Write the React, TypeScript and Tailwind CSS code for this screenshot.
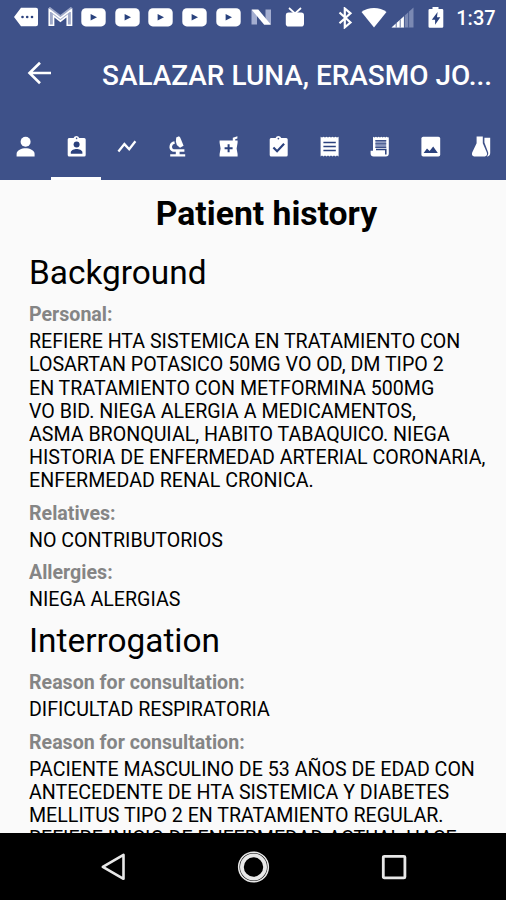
import type { ReactNode } from 'react';

type IconProps = { w: number; h: number; children: ReactNode; className?: string };

function Icon({ w, h, children, className }: IconProps) {
    return (
        <svg width={w} height={h} viewBox={`0 0 ${w} ${h}`} fill="currentColor" className={className}>
            {children}
        </svg>
    );
}

const BLUE = '#3e5189';
const DEEP = '#2b417d';

function VideoIcon() {
    return (
        <Icon w={25} h={20}>
            <rect x="0.3" y="1.2" width="24.4" height="18.2" rx="4.5" />
            <path d="M9.6 7 16 10.3l-6.4 3.3z" fill="#28417d" />
        </Icon>
    );
}

function StatusBar() {
    return (
        <div className="flex h-[34px] shrink-0 items-start pt-[7px] pl-[14px]">
            <Icon w={25} h={20} className="mr-[8.5px]">
                <path d="M7 .8h15a2 2 0 0 1 2 2v14.4a2 2 0 0 1-2 2H7L0 10z" />
                <circle cx="8.5" cy="10" r="1.3" fill={DEEP} />
                <circle cx="13.2" cy="10" r="1.3" fill={DEEP} />
                <circle cx="18" cy="10" r="1.3" fill={DEEP} />
            </Icon>
            <Icon w={25} h={20} className="mr-[8.5px]">
                <path d="M3.4 18.2V3.8l9 7 9-7v14.4" fill="none" stroke="#9fa9c9" strokeWidth="4.4" />
                <path d="M1.2 18.2V2.6L12.4 11 23.6 2.6v15.6h-4.4V8.8l-6.8 5.4-6.8-5.4v9.4z" fill="none" stroke="#fff" strokeWidth="1.5" />
            </Icon>
            <div className="flex gap-[8.7px]">
                <VideoIcon />
                <VideoIcon />
                <VideoIcon />
                <VideoIcon />
                <VideoIcon />
            </div>
            <Icon w={21} h={20} className="ml-[10px]">
                <path d="M.5 3h5.5v14.5H.5zM14.5 2.5H20V17h-5.5z" fill="#a3add0" />
                <path d="M.5 2.5h6.8L20 17.8h-6.8z" />
            </Icon>
            <Icon w={20} h={21} className="ml-[13px]">
                <path d="m4 1 6 5.5L16 1" fill="none" stroke="currentColor" strokeWidth="1.7" />
                <rect x="0.8" y="5.6" width="18.2" height="14" rx="2.8" />
            </Icon>
            <Icon w={15} h={22} className="ml-[33px]">
                <path d="m1.5 5.5 11 10-5.7 4.8V1.5l5.7 4.8-11 10" fill="none" stroke="currentColor" strokeWidth="2.2" />
            </Icon>
            <Icon w={26} h={21} className="ml-[8.5px]">
                <path d="M.5 5C7-.5 19-.5 25.5 5L13 20.5z" />
            </Icon>
            <Icon w={23} h={21} className="ml-[4px]">
                <path d="M22.5.5v20H.5z" fill="#7b89b3" />
                <path d="M13 9.2v11.3H.5z" />
                <path d="M5.2 16v4.5M9.2 12.5v8M13.4 8.5v12M17.6 4.5v16" stroke={BLUE} strokeWidth=".8" />
            </Icon>
            <Icon w={16} h={22} className="ml-[14px]">
                <path d="M4.5 0h6v2H14a1.3 1.3 0 0 1 1.3 1.3v16.2a1.3 1.3 0 0 1-1.3 1.3H1.8a1.3 1.3 0 0 1-1.3-1.3V3.3A1.3 1.3 0 0 1 1.8 2h2.7z" />
                <path d="M9.6 5 3.8 12.7h3.3v5l5.2-7.5H9z" fill={DEEP} />
            </Icon>
            <span className="ml-[12px] text-[20px] leading-[23px] font-medium">1:37</span>
        </div>
    );
}

const tabs: ReactNode[] = [
    <>
        <circle cx="12.6" cy="7.8" r="5" />
        <path d="M3.6 22.4v-2.6c0-3.6 5.2-5.6 9-5.6s9 2 9 5.6v2.6z" />
    </>,
    <>
        <path d="M5 4h4.6a3 3 0 0 1 5.6 0h5a1.5 1.5 0 0 1 1.5 1.5v15.6a1.5 1.5 0 0 1-1.5 1.5H5.2a1.5 1.5 0 0 1-1.5-1.5V5.5A1.5 1.5 0 0 1 5 4z" />
        <circle cx="12.6" cy="4.4" r=".8" fill={BLUE} />
        <circle cx="12.6" cy="10.4" r="3" fill={DEEP} />
        <path d="M6.8 19.8v-1.4c0-2.2 3.8-3.4 5.8-3.4s5.8 1.2 5.8 3.4v1.4z" fill={DEEP} />
    </>,
    <path d="m4.4 17.4 6-7.3 4.8 5.2 6.2-8" fill="none" stroke="currentColor" strokeWidth="2.3" />,
    <>
        <path d="M5.2 20.2h15v2.3h-15zM10.8 16.5h3.8V21h-3.8z" />
        <path d="M9.6 8.6C5.4 9.4 4 14.6 8.4 16.6h11" fill="none" stroke="currentColor" strokeWidth="2.5" />
        <path d="m11.2 3.6 2.8-1.4 1.2 1.4 3.4 8.2-3.6 1.9-3.2-2.7-.9-3.4z" />
    </>,
    <>
        <path d="M3.6 6.4h13.2V3.8l4.6-1.6v2.2l-2.2.8v1.2h2.4v2.4L20.6 14.4l1 5.7v2.3h-18v-2.3l1-5.7-1-5.6z" />
        <path d="M12.6 10.3v8M8.6 14.3h8" stroke={DEEP} strokeWidth="2" />
    </>,
    <>
        <path d="M5 4h4.6a3 3 0 0 1 5.6 0h5a1.5 1.5 0 0 1 1.5 1.5v15.6a1.5 1.5 0 0 1-1.5 1.5H5.2a1.5 1.5 0 0 1-1.5-1.5V5.5A1.5 1.5 0 0 1 5 4z" />
        <circle cx="12.4" cy="4.6" r=".9" fill={BLUE} />
        <path d="m7.4 13.4 3.7 3.8 7-7.4" fill="none" stroke={DEEP} strokeWidth="2.2" />
    </>,
    <>
        <path d="M3.6 2.8 5 3.6l1.5-.8L8 3.6l1.5-.8 1.5.8 1.5-.8 1.5.8 1.5-.8 1.5.8 1.5-.8 1.5.8 1.6-.8v19.6l-1.6-.8-1.5.8-1.5-.8-1.5.8-1.5-.8-1.5.8-1.5-.8-1.5.8-1.5-.8-1.5.8-1.5-.8-1.4.8z" />
        <path d="M6.4 8.6h12.4M6.4 12.6h12.4M6.4 16.6h12.4" stroke={DEEP} strokeWidth="1.5" />
    </>,
    <>
        <path d="m6 2.8 1.3.8L9 2.8l1.3.8 1.3-.8 1.4.8 1.3-.8 1.3.8 1.4-.8 1.3.8 1.3-.8 1.4.8.8-.4v16.2a3 3 0 0 1-3 3H6.6a3 3 0 0 1-3-3v-2.6H6z" />
        <path d="M8.4 6h10.8v8H8.4z" fill="#8e9abf" />
        <path d="M8.4 9.8h10.8M8.4 6.6h10.8M8.4 13.4h10.8" stroke={BLUE} strokeWidth="1.1" />
        <path d="M9 15.6h9.8v4.8" fill="none" stroke={DEEP} strokeWidth="1.5" />
    </>,
    <>
        <rect x="3.4" y="2.8" width="18.8" height="19.8" rx="1.8" />
        <path d="m5.6 19 3.4-4.6 2.6 2.6 3.6-4.4 4.6 6.4z" fill={DEEP} />
    </>,
    <>
        <path d="M7.6 2.6h6.2v6.6l4 9.4c.8 2-.2 3.8-2 3.8H5.2c-1.8 0-2.8-1.8-2-3.8l4.4-9.4z" />
        <path d="M15.4 3.8h5.8V19a3.4 3.4 0 0 1-3.4 3.4c1.4-1.2 1.8-3 1.2-4.4l-3.6-9.4z" />
    </>,
];

function TabBar() {
    return (
        <nav className="grid h-[67px] shrink-0 grid-cols-10">
            {tabs.map((icon, i) => (
                <button
                    key={i}
                    className={`flex justify-center border-b-[3px] pt-[21px] ${i === 1 ? 'border-white' : 'border-transparent'}`}
                >
                    <Icon w={24} h={24}>{icon}</Icon>
                </button>
            ))}
        </nav>
    );
}

type FieldProps = { label: string; lines: string[] };

function Field({ label, lines }: FieldProps) {
    return (
        <div className="mb-[9.2px]">
            <h3 className="mb-[3.8px] text-[19.6px] leading-[23.3px] font-bold text-[#858585]">{label}</h3>
            {lines.map((line) => (
                <p key={line} className="text-[19.62px] leading-[23.2px] whitespace-nowrap">{line}</p>
            ))}
        </div>
    );
}

export default function App() {
    return (
        <div className="flex h-[900px] w-[506px] flex-col overflow-hidden bg-[#fafafa] font-['Roboto',sans-serif] text-black">
            <header className="flex h-[180px] shrink-0 flex-col bg-[#3e5189] text-white">
                <StatusBar />
                <div className="flex h-[79px] items-center pl-[27px]">
                    <Icon w={26} h={24} className="mt-[-1px]">
                        <path d="M24 12H2.5M13 1.7 2.5 12 13 22.3" fill="none" stroke="currentColor" strokeWidth="2.6" />
                    </Icon>
                    <h1 className="mt-[4px] ml-[49px] text-[27.95px] font-medium whitespace-nowrap">SALAZAR LUNA, ERASMO JO...</h1>
                </div>
                <TabBar />
            </header>

            <main className="min-h-0 flex-1 overflow-hidden pl-[29px]">
                <h1 className="mt-[14px] ml-[-29px] pl-[27px] text-center text-[33.7px] leading-[40px] font-bold">Patient history</h1>
                <h2 className="mt-[19px] mb-[10px] text-[33.4px] leading-[40px]">Background</h2>
                <Field
                    label="Personal:"
                    lines={[
                        'REFIERE HTA SISTEMICA EN TRATAMIENTO CON',
                        'LOSARTAN POTASICO 50MG VO OD, DM TIPO 2',
                        'EN TRATAMIENTO CON METFORMINA 500MG',
                        'VO BID. NIEGA ALERGIA A MEDICAMENTOS,',
                        'ASMA BRONQUIAL, HABITO TABAQUICO. NIEGA',
                        'HISTORIA DE ENFERMEDAD ARTERIAL CORONARIA,',
                        'ENFERMEDAD RENAL CRONICA.',
                    ]}
                />
                <Field label="Relatives:" lines={['NO CONTRIBUTORIOS']} />
                <Field label="Allergies:" lines={['NIEGA ALERGIAS']} />
                <h2 className="mt-[-0.5px] mb-[10px] text-[33.4px] leading-[41px]">Interrogation</h2>
                <Field label="Reason for consultation:" lines={['DIFICULTAD RESPIRATORIA']} />
                <Field
                    label="Reason for consultation:"
                    lines={[
                        'PACIENTE MASCULINO DE 53 AÑOS DE EDAD CON',
                        'ANTECEDENTE DE HTA SISTEMICA Y DIABETES',
                        'MELLITUS TIPO 2 EN TRATAMIENTO REGULAR.',
                        'REFIERE INICIO DE ENFERMEDAD ACTUAL HACE',
                    ]}
                />
            </main>

            <footer className="flex h-[67px] shrink-0 items-center bg-black pl-[100px] text-[#e8e8e8]">
                <Icon w={26} h={28}>
                    <path d="M23.5 1.8v24L2.8 13.8z" fill="none" stroke="currentColor" strokeWidth="2.6" strokeLinejoin="round" />
                </Icon>
                <Icon w={34} h={34} className="ml-[111px]">
                    <circle cx="16.5" cy="17" r="14.8" fill="none" stroke="currentColor" strokeWidth="1.6" />
                    <circle cx="16.5" cy="17" r="11.6" fill="none" stroke="currentColor" strokeWidth="3.8" />
                </Icon>
                <Icon w={26} h={26} className="ml-[110px]">
                    <rect x="2.3" y="2.3" width="21.6" height="21.6" rx="1" fill="none" stroke="currentColor" strokeWidth="2.8" />
                </Icon>
            </footer>
        </div>
    );
}
